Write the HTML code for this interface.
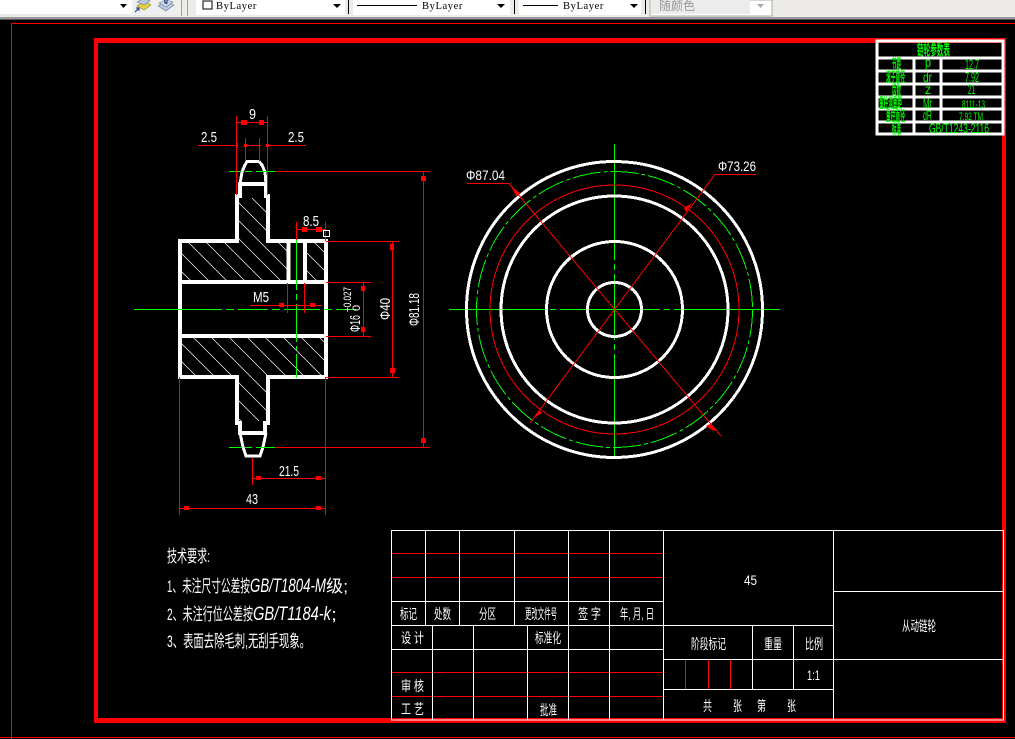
<!DOCTYPE html>
<html><head><meta charset="utf-8">
<style>
html,body{margin:0;padding:0;background:#000;width:1015px;height:739px;overflow:hidden}
svg{position:absolute;left:0;top:0;display:block}
text{font-family:"Liberation Sans","Noto Sans CJK SC",sans-serif}
.g{shape-rendering:crispEdges}
.mono{font-family:"Liberation Serif",serif;font-size:11px;fill:#000;letter-spacing:.6px}
.w{fill:#fff}.gr{fill:#0f0}
</style></head>
<body>
<svg width="1015" height="739" viewBox="0 0 1015 739" xmlns="http://www.w3.org/2000/svg">
<defs>
<pattern id="h" patternUnits="userSpaceOnUse" width="18" height="18"><path d="M-1 -1L19 19" stroke="#fff" stroke-width="0.7" fill="none"/></pattern>
</defs>
<rect width="1015" height="739" fill="#000"/>
<!-- toolbar -->
<g class="g">
<rect width="1015" height="17" fill="#ecebe8"/>
<rect width="181" height="15" fill="#fff"/>
<rect x="0" y="14" width="181" height="2" fill="#e8e8e8"/>
<rect x="132" y="0" width="49" height="15" fill="#efefef"/>
<rect x="181" y="0" width="1" height="16" fill="#a0a0a0"/><rect x="187" y="0" width="1" height="16" fill="#a0a0a0"/>
<rect x="196" y="0" width="149" height="15" fill="#fff"/>
<rect x="348" y="0" width="1" height="14" fill="#000"/>
<rect x="353" y="0" width="157" height="15" fill="#fff"/>
<rect x="514" y="0" width="1" height="14" fill="#000"/>
<rect x="519" y="0" width="122" height="15" fill="#fff"/>
<rect x="645" y="0" width="1" height="14" fill="#000"/>
<rect x="650" y="0" width="122" height="16" fill="#fff" stroke="#a9a9a9"/>
<rect x="651" y="0" width="99" height="14" fill="#ececec"/>
<rect x="0" y="17" width="1015" height="2" fill="#9a9a9a"/>
<rect x="0" y="19" width="1015" height="1" fill="#555"/>
<rect x="203" y="1" width="9" height="8" fill="#fff" stroke="#000"/>
<rect x="357" y="5" width="60" height="1" fill="#000"/>
<rect x="523" y="5" width="35" height="1" fill="#000"/>
</g>
<polygon points="120,4 127,4 123.500,8" fill="#000"/>
<polygon points="333,4 341,4 337,8" fill="#000"/>
<polygon points="497,4 505,4 501,8" fill="#000"/>
<polygon points="630,4 638,4 634,8" fill="#000"/>
<polygon points="757,4 764,4 760.500,8" fill="#aaa"/>
<!-- layer icons -->
<polygon points="137,6 144,1 151,5 144,10" fill="#e8cf3a" stroke="#8a8a4a" stroke-width="0.6"/>
<polygon points="137,2 144,-2 150,1 144,5" fill="#b7c8dc" stroke="#6a7f99" stroke-width="0.6"/>
<path d="M135 12L139 8M136 8h3v3" stroke="#1b3a78" fill="none"/>
<polygon points="158,6 166,1 174,5 166,11" fill="#b7c8dc" stroke="#6a7f99" stroke-width="0.6"/>
<polygon points="159,3 166,0 173,2 166,7" fill="#d0dbe8" stroke="#6a7f99" stroke-width="0.6"/>
<path d="M164 0L167 4M164 3h3V0" stroke="#1b3a78" fill="none"/>
<text class="mono" x="216" y="9" textLength="41" lengthAdjust="spacingAndGlyphs">ByLayer</text>
<text class="mono" x="422" y="9" textLength="41" lengthAdjust="spacingAndGlyphs">ByLayer</text>
<text class="mono" x="563" y="9" textLength="41" lengthAdjust="spacingAndGlyphs">ByLayer</text>
<text x="659" y="10" font-size="12" fill="#999" textLength="36" lengthAdjust="spacingAndGlyphs">随颜色</text>

<!-- paper borders -->
<g class="g" fill="none" stroke="#f00">
<path d="M11.500 739V23.500H1015" stroke-width="1"/>
<path d="M0 737.500H1015" stroke-width="1"/>
</g>
<g class="g" fill="#f00">
<rect x="94" y="38" width="912" height="5"/>
<rect x="94" y="718" width="912" height="5"/>
<rect x="94" y="38" width="4" height="685"/>
<rect x="1002" y="38" width="4" height="685"/>
</g>

<!-- hatching -->
<g class="g">
<path d="M182 243H239V198H266V243H288V280H182Z M307 243H324V280H307Z" fill="url(#h)"/>
<path d="M182 338H324V375H266V421H239V375H182Z" fill="url(#h)"/>
<rect x="290" y="243" width="13" height="37" fill="#000"/>
</g>

<!-- left view outlines -->
<g fill="none" stroke="#fff" stroke-width="4" stroke-linejoin="miter" class="g">
<path d="M180 241H237V196H240V184H266V196H268V241H326V377H268V423H265V433H240V423H237V377H180Z"/>
<path d="M180 282H326M180 336H326"/>
<path d="M288.500 241V282M305 241V282"/>
</g>
<g fill="none" stroke="#fff" stroke-width="3" class="g">
<path d="M240 184L242 172L245 165L247 161.500H259L262 165L265 172L266 184"/>
<path d="M240 433L243 447L246 456H260L263 447L266 433"/>
</g>

<!-- centre lines -->
<g class="g" stroke="#0f0" fill="none" stroke-width="1">
<path d="M134 309.500H222M226 309.500H234M238 309.500H268M272 309.500H280M284 309.500H320M324 309.500H332M336 309.500H356"/>
<path d="M229 171.500H241M245 171.500H252M256 171.500H275M229 447.500H241M245 447.500H252M256 447.500H275"/>
<path d="M296.500 231V290M296.500 294V300M296.500 304V342M296.500 346V350M296.500 354V378" stroke-width="1"/>
<path d="M449 309.500H546M550 309.500H556M560 309.500H660M664 309.500H670M674 309.500H780"/>
<path d="M614.500 144V260M614.500 264V270M614.500 274V340M614.500 344V350M614.500 354V458"/>
</g>

<!-- dims -->
<g class="g" stroke="#f00" fill="none" stroke-width="1">
<path d="M236.500 116V195M267.500 116V195M236 122.500H267"/>
<path d="M198 145.500H237M267 145.500H306M245 145.500H261M245.500 138V161M259.500 138V161"/>
<path d="M296 229.500H326M296.500 222V240M325.500 222V241"/>
<path d="M275 171.500H430M275 447.500H430M423.500 171V447"/>
<path d="M326 241.500H399M326 377.500H399M392.500 241V377"/>
<path d="M326 282.500H371M326 336.500H371M363.500 282V336"/>
<path d="M250 305.500H322M287.500 283V313M304.500 283V313"/>
<path d="M179.500 377V515M325.500 377V515M180 508.500H326"/>
<path d="M252.500 458V485M252 478.500H325"/>
</g>
<g class="g" fill="#f00">
<rect x="241" y="120" width="6" height="5"/><rect x="259" y="120" width="5" height="5"/>
<rect x="236" y="143" width="2" height="5"/><rect x="244" y="144" width="3" height="3"/><rect x="266" y="144" width="3" height="3"/>
<rect x="302" y="227" width="5" height="5"/><rect x="316" y="227" width="6" height="5"/>
<rect x="421" y="176" width="5" height="5"/><rect x="421" y="438" width="5" height="5"/>
<rect x="390" y="244" width="4" height="6"/><rect x="390" y="368" width="5" height="5"/>
<rect x="361" y="286" width="4" height="5"/><rect x="361" y="327" width="4" height="5"/>
<rect x="279" y="303" width="5" height="4"/><rect x="310" y="303" width="5" height="4"/>
<rect x="184" y="506" width="5" height="4"/><rect x="316" y="506" width="5" height="4"/>
<rect x="256" y="476" width="5" height="4"/><rect x="316" y="476" width="5" height="4"/>
</g>
<rect x="323.500" y="230.500" width="6" height="6" fill="none" stroke="#fff" class="g"/>
<g class="w" font-size="15">
<text x="249" y="119" textLength="7" lengthAdjust="spacingAndGlyphs">9</text>
<text x="201" y="142" textLength="16" lengthAdjust="spacingAndGlyphs">2.5</text>
<text x="288" y="142" textLength="16" lengthAdjust="spacingAndGlyphs">2.5</text>
<text x="303" y="226" textLength="16" lengthAdjust="spacingAndGlyphs">8.5</text>
<text x="253" y="302" textLength="16" lengthAdjust="spacingAndGlyphs">M5</text>
<text x="279" y="476" textLength="20" lengthAdjust="spacingAndGlyphs">21.5</text>
<text x="246" y="504" textLength="12" lengthAdjust="spacingAndGlyphs">43</text>
<text transform="translate(419,326) rotate(-90)" textLength="33" lengthAdjust="spacingAndGlyphs">Φ81.18</text>
<text transform="translate(390,320) rotate(-90)" textLength="22" lengthAdjust="spacingAndGlyphs">Φ40</text>
<text transform="translate(360,332) rotate(-90)" textLength="17" lengthAdjust="spacingAndGlyphs">Φ16</text>
<text transform="translate(351,312) rotate(-90)" font-size="11" textLength="25" lengthAdjust="spacingAndGlyphs">+0.027</text>
<text transform="translate(360,311) rotate(-90)" font-size="11" textLength="6" lengthAdjust="spacingAndGlyphs">0</text>
</g>

<!-- right view -->
<g fill="none" class="g">
<circle cx="614.500" cy="309.500" r="148" stroke="#fff" stroke-width="3"/>
<circle cx="614.500" cy="309.500" r="138" stroke="#0f0" stroke-width="1" stroke-dasharray="28 3 4 3"/>
<circle cx="614.500" cy="309.500" r="124.500" stroke="#f00" stroke-width="1"/>
<circle cx="614.500" cy="309.500" r="113.500" stroke="#fff" stroke-width="3"/>
<circle cx="614.500" cy="309.500" r="68" stroke="#fff" stroke-width="3"/>
<circle cx="614.500" cy="309.500" r="27" stroke="#fff" stroke-width="3"/>
<path d="M467 183.500H509L721 436" stroke="#f00" stroke-width="1"/>
<path d="M756 174.500H715L530 423" stroke="#f00" stroke-width="1"/>
</g>
<g fill="#f00">
<polygon points="511,186 520,193 516,196"/>
<polygon points="716,431 710,424 706,426 712,430"/>
<polygon points="692,203 686,212 684,208"/>
<polygon points="534,418 539,410 542,413"/>
</g>
<g class="w" font-size="14">
<text x="466" y="180" textLength="39" lengthAdjust="spacingAndGlyphs">Φ87.04</text>
<text x="718" y="171" textLength="38" lengthAdjust="spacingAndGlyphs">Φ73.26</text>
</g>

<!-- tech notes -->
<g class="w" font-size="17">
<text x="167" y="562" textLength="43" lengthAdjust="spacingAndGlyphs">技术要求:</text>
<text x="167" y="592" textLength="83" lengthAdjust="spacingAndGlyphs">1、未注尺寸公差按</text>
<text x="250" y="592" font-size="19" font-style="italic" textLength="76" lengthAdjust="spacingAndGlyphs">GB/T1804-M</text>
<text x="326" y="592" textLength="22" lengthAdjust="spacingAndGlyphs">级;</text>
<text x="167" y="620" textLength="86" lengthAdjust="spacingAndGlyphs">2、未注行位公差按</text>
<text x="253" y="620" font-size="19" font-style="italic" textLength="78" lengthAdjust="spacingAndGlyphs">GB/T1184-k</text>
<text x="331" y="620" textLength="6" lengthAdjust="spacingAndGlyphs">;</text>
<text x="167" y="647" textLength="143" lengthAdjust="spacingAndGlyphs">3、表面去除毛刺,无刮手现象。</text>
</g>

<!-- title block -->
<g class="g" fill="none" stroke-width="1">
<g stroke="#f00">
<path d="M392 553.500H663M392 577.500H663M392 672.500H663M392 696.500H663"/>
<path d="M685.500 659V689M708.500 659V689M730.500 659V689"/>
</g>
<g stroke="#fff">
<rect x="391.500" y="530.500" width="612" height="189.500"/>
<path d="M392 601.500H663M392 625.500H833M392 649.500H663M663 659.500H1003M663 689.500H833M833 591.500H1003"/>
<path d="M425.500 530V625M459.500 530V625M514.500 530V625M568.500 530V720M609.500 530V720M663.500 530V720M833.500 530V720"/>
<path d="M432.500 625V720M473.500 625V720M527.500 625V720M752.500 625V689M793.500 625V689"/>
</g>
</g>
<g class="w" font-size="14">
<text x="400" y="619" textLength="17" lengthAdjust="spacingAndGlyphs">标记</text>
<text x="434" y="619" textLength="17" lengthAdjust="spacingAndGlyphs">处数</text>
<text x="479" y="619" textLength="17" lengthAdjust="spacingAndGlyphs">分区</text>
<text x="525" y="619" textLength="32" lengthAdjust="spacingAndGlyphs">更改文件号</text>
<text x="578" y="619" textLength="23" lengthAdjust="spacingAndGlyphs">签 字</text>
<text x="620" y="619" textLength="34" lengthAdjust="spacingAndGlyphs">年, 月, 日</text>
<text x="401" y="643" textLength="23" lengthAdjust="spacingAndGlyphs">设 计</text>
<text x="535" y="643" textLength="26" lengthAdjust="spacingAndGlyphs">标准化</text>
<text x="401" y="691" textLength="23" lengthAdjust="spacingAndGlyphs">审 核</text>
<text x="401" y="714" textLength="23" lengthAdjust="spacingAndGlyphs">工 艺</text>
<text x="540" y="715" textLength="17" lengthAdjust="spacingAndGlyphs">批准</text>
<text x="691" y="649" textLength="35" lengthAdjust="spacingAndGlyphs">阶段标记</text>
<text x="764" y="649" textLength="18" lengthAdjust="spacingAndGlyphs">重量</text>
<text x="805" y="649" textLength="18" lengthAdjust="spacingAndGlyphs">比例</text>
<text x="744" y="585" textLength="13" lengthAdjust="spacingAndGlyphs">45</text>
<text x="807" y="680" textLength="13" lengthAdjust="spacingAndGlyphs">1:1</text>
<text x="902" y="631" textLength="34" lengthAdjust="spacingAndGlyphs">从动链轮</text>
<text x="703" y="711" textLength="9" lengthAdjust="spacingAndGlyphs">共</text>
<text x="733" y="711" textLength="9" lengthAdjust="spacingAndGlyphs">张</text>
<text x="757" y="711" textLength="9" lengthAdjust="spacingAndGlyphs">第</text>
<text x="787" y="711" textLength="9" lengthAdjust="spacingAndGlyphs">张</text>
</g>

<!-- gear param table -->
<g class="g" fill="none" stroke="#fff" stroke-width="3">
<rect x="877" y="41" width="126" height="93"/>
<path d="M877 58H1003M877 71H1003M877 84H1003M877 97H1003M877 109H1003M877 122H1003"/>
<path d="M914 58V134M941 58V122"/>
</g>
<g class="gr" font-size="14">
<text x="917" y="55" font-size="15" font-weight="bold" textLength="33" lengthAdjust="spacingAndGlyphs">链轮参数表</text>
<text x="892" y="69" font-weight="bold" textLength="9" lengthAdjust="spacingAndGlyphs">节距</text>
<text x="886" y="82" font-weight="bold" textLength="19" lengthAdjust="spacingAndGlyphs">滚子直径</text>
<text x="892" y="95" font-weight="bold" textLength="9" lengthAdjust="spacingAndGlyphs">齿数</text>
<text x="879" y="108" font-weight="bold" textLength="23" lengthAdjust="spacingAndGlyphs">量柱测量距</text>
<text x="886" y="121" font-weight="bold" textLength="19" lengthAdjust="spacingAndGlyphs">量柱直径</text>
<text x="892" y="134" font-weight="bold" textLength="9" lengthAdjust="spacingAndGlyphs">标准</text>
<text x="925" y="67" textLength="6" lengthAdjust="spacingAndGlyphs">p</text>
<text x="923" y="82" textLength="9" lengthAdjust="spacingAndGlyphs">dr</text>
<text x="925" y="94" textLength="6" lengthAdjust="spacingAndGlyphs">z</text>
<text x="923" y="108" textLength="9" lengthAdjust="spacingAndGlyphs">Mr</text>
<text x="923" y="120" textLength="9" lengthAdjust="spacingAndGlyphs">dR</text>
<text x="965" y="69" textLength="14" lengthAdjust="spacingAndGlyphs">12.7</text>
<text x="965" y="82" textLength="14" lengthAdjust="spacingAndGlyphs">7.92</text>
<text x="968" y="94" textLength="7" lengthAdjust="spacingAndGlyphs">21</text>
<text x="962" y="108" font-size="11" textLength="23" lengthAdjust="spacingAndGlyphs">8111-13</text>
<text x="959" y="120" font-size="11" textLength="24" lengthAdjust="spacingAndGlyphs">7.92 TM</text>
<text x="929" y="133" textLength="60" lengthAdjust="spacingAndGlyphs">GB/T1243-2116</text>
</g>
</svg>
</body></html>
